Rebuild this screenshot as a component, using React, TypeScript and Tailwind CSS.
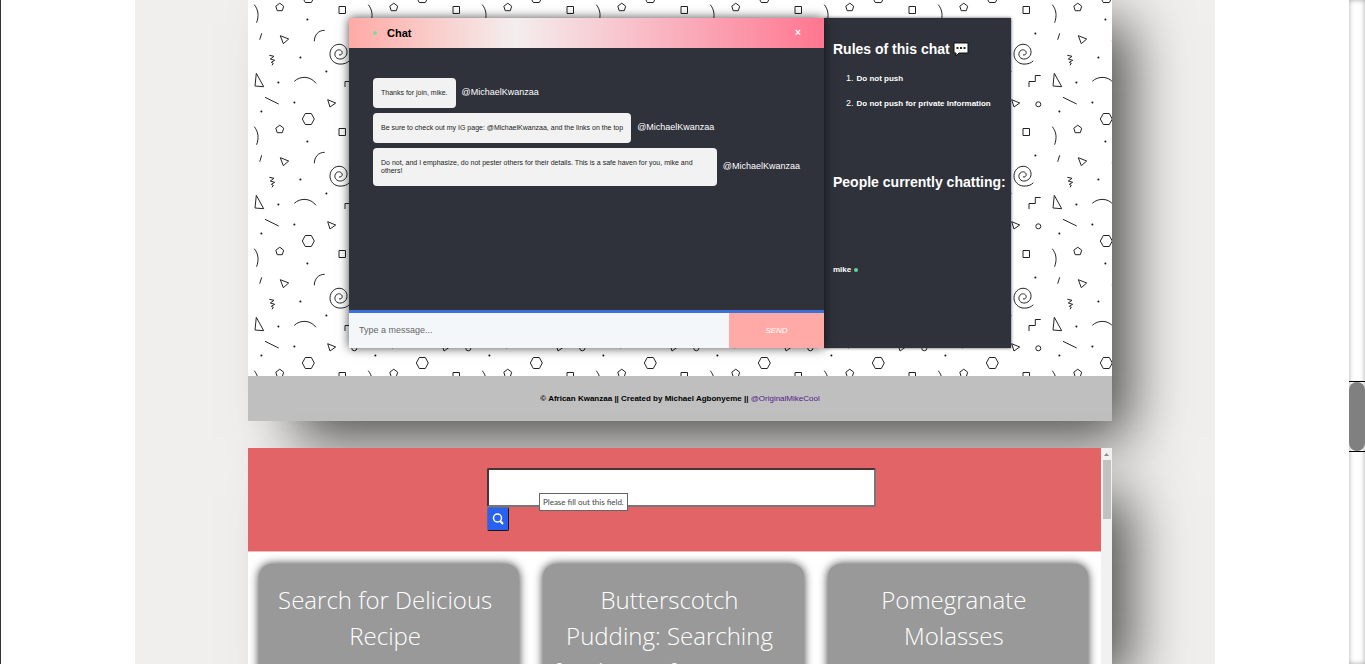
import React from "react";

const dots: [number, number][] = [
  [59, 19], [103, 33], [52, 57], [78, 71], [30, 82], [46, 102], [13, 111],
];

function Doodles() {
  return (
    <svg className="absolute inset-0 h-full w-full" aria-hidden="true">
      <defs>
        <pattern id="doodles" width="114" height="122" y="24" patternUnits="userSpaceOnUse">
          <g fill="none" stroke="#222" strokeWidth="1">
            <path d="M6.3 4.7C10.5 10 11 16 8.6 22.7" />
            <path d="M31.8 3.2L35.7 6.2L34.3 10.7H29.2L27.8 6.2Z" />
            <path d="M54.3 119L57.3 113.5H63.3L66.3 119L63.3 124.5H57.3Z" />
            <path d="M54.3 -3L57.3 -8.5H63.3L66.3 -3L63.3 2.5H57.3Z" />
            <path d="M91 6.5H97.5V13.5H91Z" />
            <path d="M13.7 33.3L11.7 39.7" />
            <path d="M32.3 35.7L40.7 39L35.3 43.7Z" />
            <path d="M76.7 30.3C70 30.5 66.5 35 66.3 41.3" />
            <path d="M91 54.8C92.4 55.6 94.4 54.4 94.2 52.5C94 50.2 91 49 88.9 50.4C86.2 52.2 86.3 56.2 88.8 58C92.3 60.5 97.6 58.3 98.8 54C100 49.5 97 44.8 92 44.3C86.5 43.8 82.2 48.2 82 53.7C81.8 59.6 86.3 64 92 64.1C96 64.2 99.2 63 101.3 60.8" />
            <path d="M21.3 55.3L26 56.3L22.3 59L26.7 60.3L23.3 62.3L25.3 63.3L24 65.3" />
            <path d="M8.3 73.3L7 86L15.7 86.7Z" />
            <path d="M46.3 81.3C52 76 62 75.5 68 83.3" />
            <path d="M97 87V81.5H103.3V75.5H108.7" />
            <path d="M17 97.3L30.7 104" />
            <path d="M79.7 99.7L87.7 103L82 107Z" />
            <circle cx="106.3" cy="104.3" r="2.5" />
          </g>
          {dots.map(([x, y]) => (
            <circle key={`${x}-${y}`} cx={x + 0.4} cy={y + 0.4} r="1" fill="#111" />
          ))}
        </pattern>
      </defs>
      <rect width="100%" height="100%" fill="url(#doodles)" />
    </svg>
  );
}

function Message({ text }: { text: string }) {
  return (
    <li className="flex items-center gap-[6px] text-[9px] text-white">
      <p className="rounded-[4px] bg-[#f2f2f2] px-[8px] py-[11px] text-[7px] leading-[8px] text-[#222]">{text}</p>
      <span className="shrink-0">@MichaelKwanzaa</span>
    </li>
  );
}

const messages = [
  "Thanks for join, mike.",
  "Be sure to check out my IG page: @MichaelKwanzaa, and the links on the top",
  "Do not, and I emphasize, do not pester others for their details. This is a safe haven for you, mike and others!",
];

function Chat() {
  return (
    <div className="relative z-10 flex w-[475px] flex-col shadow-[0_0_10px_rgba(0,0,0,0.7)]">
      <header className="flex h-[30px] items-center bg-[linear-gradient(90deg,#ffaaa6,#f4eeee_35%,#ff7690)] pr-[23px] pl-[24px]">
        <span className="h-[4px] w-[4px] rounded-full bg-[#7ddc9a]" />
        <h2 className="ml-[10px] flex-1 text-[11px] leading-[16px] font-bold text-black">Chat</h2>
        <button aria-label="Close chat" className="h-[12px] w-[6px] text-[10px] leading-[12px] font-bold text-white">×</button>
      </header>
      <ul className="flex flex-1 flex-col gap-[5px] bg-[#2f323b] px-[24px] pt-[30px]">
        {messages.map((m) => (
          <Message key={m} text={m} />
        ))}
      </ul>
      <form className="flex h-[38px] border-t-[3px] border-[#3d6fd8]">
        <input aria-label="Message" placeholder="Type a message..." className="min-w-0 flex-1 bg-[#f4f7fa] px-[10px] text-[9px] text-[#555] outline-none placeholder:text-[#666]" />
        <button type="button" className="w-1/5 bg-[#ffaaa6] text-[8px] text-white italic">SEND</button>
      </form>
    </div>
  );
}

function Rules() {
  return (
    <aside className="w-[187px] bg-[#2f323b] pt-[22px] pl-[9px] font-bold whitespace-nowrap text-white shadow-[0_0_3px_rgba(0,0,0,0.7)]">
      <h2 className="flex items-center gap-[3px] text-[14px] leading-[18px]">
        Rules of this chat
        <svg className="h-[14px] w-[16px]" viewBox="0 0 16 14" aria-hidden="true">
          <path d="M1 1H15V11H6L3 14V11H1Z" fill="#fff" stroke="#111" strokeWidth="1" />
          <path d="M3.5 5h2v2h-2zM7 5h2v2H7zM10.5 5h2v2h-2z" fill="#222" />
        </svg>
      </h2>
      <ol className="mt-[14px] flex flex-col gap-[12px] pl-[13px] text-[8px] leading-[12px]">
        <li><span className="mr-[3px] text-[9px] font-normal">1.</span>Do not push</li>
        <li><span className="mr-[3px] text-[9px] font-normal">2.</span>Do not push for private Information</li>
      </ol>
      <h2 className="mt-[63px] text-[14px] leading-[18px]">People currently chatting:</h2>
      <p className="mt-[73px] flex items-center gap-[3px] text-[8px] leading-[12px]">
        mike <span className="h-[4px] w-[4px] rounded-full bg-[#5fd3a0]" />
      </p>
    </aside>
  );
}

const recipes = ["Search for Delicious Recipe", "Butterscotch Pudding: Searching for the Perfect Recipe", "Pomegranate Molasses"];

export default function App() {
  return (
    <div className="flex h-screen overflow-hidden border-l border-[#333] bg-white font-['Liberation_Sans',Arial,sans-serif]">
      <div className="flex min-w-0 flex-1 justify-center">
        <main className="flex w-full max-w-[1080px] flex-col overflow-hidden bg-[#f0efed] pr-[103px] pl-[113px]">
          <section className="relative -mt-6 shrink-0 shadow-[32px_32px_55px_-15px_rgba(0,0,0,0.7)]">
            <div className="relative flex justify-center bg-white pt-[42px] pb-[28px]">
              <Doodles />
              <div className="relative flex h-[330px]">
                <Chat />
                <Rules />
              </div>
            </div>
            <footer className="flex h-[45px] items-center justify-center bg-[#bfbfbf] text-[8px] font-bold text-black">
              <p>
                © African Kwanzaa || Created by Michael Agbonyeme ||{" "}
                <a href="#original" className="font-normal text-[#551a8b]">@OriginalMikeCool</a>
              </p>
            </footer>
          </section>

          <section className="relative mt-[27px] flex flex-1 bg-white shadow-[32px_32px_55px_-15px_rgba(0,0,0,0.7)]">
            <div className="min-w-0 flex-1">
              <form className="flex h-[104px] justify-center border-b border-[#f3b9ba] bg-[#e26467] pt-[20px] pl-[14px]">
                <div className="relative flex w-[389px] flex-col items-start">
                  <input aria-label="Search recipes" className="h-[39px] w-full rounded-[2px] border-2 border-t-[#4a3436] border-r-[#767676] border-b-[#767676] border-l-[#4a3436] bg-white px-2 text-sm outline-none" />
                  <button type="button" aria-label="Search" className="flex h-[24px] w-[22px] items-center justify-center rounded-[2px] border border-t-[#5a6a9a] border-r-[#15171f] border-b-[#15171f] border-l-[#5a6a9a] bg-[#2962f0]">
                    <svg className="h-[12px] w-[12px]" viewBox="0 0 12 12" fill="none" stroke="#fff" aria-hidden="true">
                      <circle cx="5.5" cy="5" r="4" strokeWidth="1.5" />
                      <path d="M8 7.8L11 11" strokeWidth="2" />
                    </svg>
                  </button>
                  <span role="tooltip" className="absolute top-[25px] left-[52px] border border-[#666] bg-white px-[3px] font-['Lato',sans-serif] text-[8px] leading-[16px] whitespace-nowrap text-[#444]">
                    Please fill out this field.
                  </span>
                </div>
              </form>
              <div className="grid h-[112px] grid-cols-3 gap-[24px] overflow-hidden pt-[12px] pr-[13px] pl-[11px]">
                {recipes.map((title) => (
                  <article key={title} className="h-[300px] rounded-[13px] bg-[#999] pt-[18px] pr-[17px] pl-[9px] text-center shadow-[0_0_10px_rgba(0,0,0,0.8)]">
                    <h3 className="font-['Open_Sans',sans-serif] text-[24px] leading-[36px] font-light text-white">{title}</h3>
                  </article>
                ))}
              </div>
            </div>
            <div className="flex w-[11px] flex-col items-center bg-[#f1f1f1]" aria-hidden="true">
              <svg className="h-[12px] w-[11px]" viewBox="0 0 11 12">
                <path d="M3 8L5.5 5L8 8Z" fill="#8a8a8a" />
              </svg>
              <div className="h-[59px] w-[8px] bg-[#c1c1c1]" />
            </div>
          </section>
        </main>
      </div>
      <div className="w-[16px] bg-white pt-[381px] shadow-[inset_0_0_5px_rgba(128,128,128,0.7)]" aria-hidden="true">
        <div className="h-[71px] border-y border-black">
          <div className="h-full rounded-[8px] bg-[#808080]" />
        </div>
      </div>
    </div>
  );
}
